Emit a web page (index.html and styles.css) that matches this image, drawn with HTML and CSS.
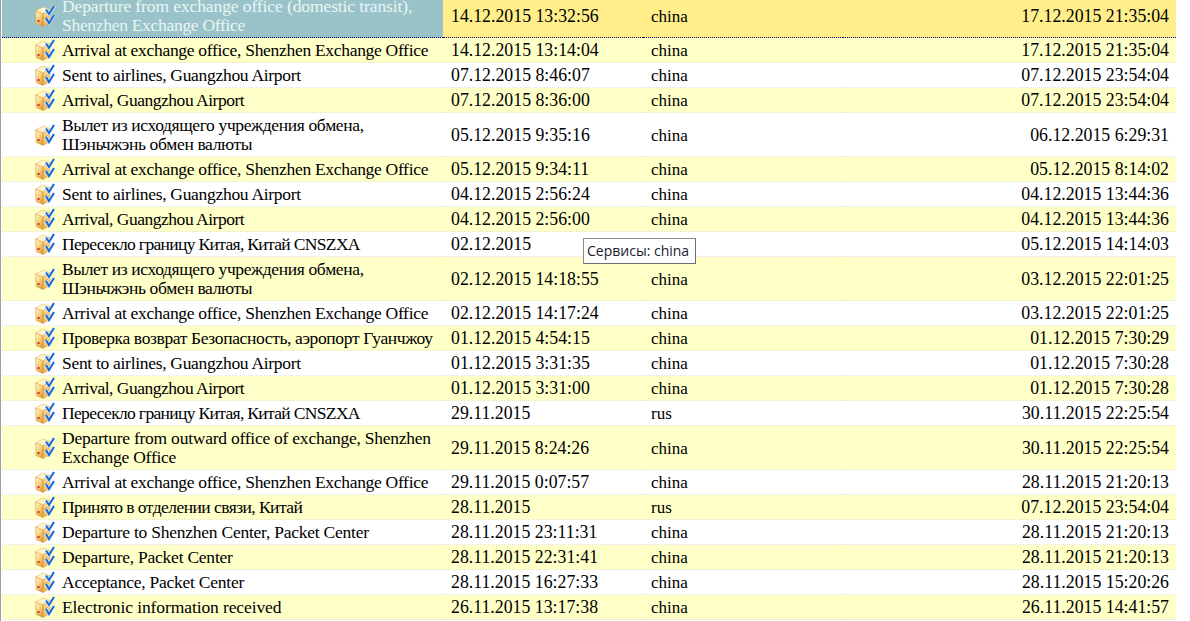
FILE: index.html
```html
<!DOCTYPE html>
<html lang="ru">
<head>
<meta charset="utf-8">
<title>Tracking</title>
<link rel="stylesheet" href="styles.css">
</head>
<body>
<svg class="defs" width="0" height="0" aria-hidden="true">
  <defs>
    <linearGradient id="boxFront" x1="0" y1="0" x2="0.6" y2="1">
      <stop offset="0" stop-color="#fff3c4"/><stop offset="0.5" stop-color="#fad686"/><stop offset="1" stop-color="#e2a040"/>
    </linearGradient>
    <linearGradient id="boxSide" x1="0" y1="0" x2="0" y2="1">
      <stop offset="0" stop-color="#fbe09c"/><stop offset="1" stop-color="#eeb658"/>
    </linearGradient>
    <linearGradient id="boxSel" x1="0" y1="0" x2="0.6" y2="1">
      <stop offset="0" stop-color="#cfe2e8"/><stop offset="0.5" stop-color="#a9c3cf"/><stop offset="1" stop-color="#7f99b0"/>
    </linearGradient>
    <linearGradient id="boxSelSide" x1="0" y1="0" x2="0" y2="1">
      <stop offset="0" stop-color="#bdd3dc"/><stop offset="1" stop-color="#8fa9bb"/>
    </linearGradient>
    <symbol id="parcel" viewBox="0 0 20 22">
      <path class="box-top" d="M0.5 6 L8 2 L15 4.500 L8 9 Z"/>
      <path class="box-front" d="M0.5 6 L8 9 V21.500 L1 18.500 Z"/>
      <path class="box-side" d="M8 9 L15 4.500 V17.500 L8 21.500 Z"/>
      <path class="box-line" d="M8 9 V21.500 M8 13.500 L15 10.500"/>
      <rect class="box-dot" x="2.500" y="15" width="2" height="2"/>
      <path class="halo" d="M11 4.500 L14 9 L19 1"/>
      <path class="halo" d="M11 13 L14 18 L19 10"/>
      <path class="check" d="M11 4.500 L14 9 L19 1"/>
      <path class="check" d="M11 13 L14 18 L19 10"/>
    </symbol>
  </defs>
</svg>
<div class="viewport">
<table class="log">
  <colgroup><col class="c-name"><col class="c-date"><col class="c-svc"><col class="c-end"></colgroup>
  <tbody>
    <tr class="selected tall"><td class="name"><div class="cell"><svg class="ico"><use href="#parcel"/></svg><span><span class="sp-wide">Departure from exchange office (domestic transit),</span><br>Shenzhen Exchange Office</span></div></td><td class="date">14.12.2015 13:32:56</td><td class="svc">china</td><td class="end">17.12.2015 21:35:04</td></tr>
    <tr class="alt"><td class="name"><div class="cell"><svg class="ico"><use href="#parcel"/></svg><span>Arrival at exchange office, Shenzhen Exchange Office</span></div></td><td class="date">14.12.2015 13:14:04</td><td class="svc">china</td><td class="end">17.12.2015 21:35:04</td></tr>
    <tr><td class="name"><div class="cell"><svg class="ico"><use href="#parcel"/></svg><span>Sent to airlines, Guangzhou Airport</span></div></td><td class="date">07.12.2015 8:46:07</td><td class="svc">china</td><td class="end">07.12.2015 23:54:04</td></tr>
    <tr class="alt"><td class="name"><div class="cell"><svg class="ico"><use href="#parcel"/></svg><span class="sp-tight">Arrival, Guangzhou Airport</span></div></td><td class="date">07.12.2015 8:36:00</td><td class="svc">china</td><td class="end">07.12.2015 23:54:04</td></tr>
    <tr class="tall"><td class="name"><div class="cell"><svg class="ico"><use href="#parcel"/></svg><span class="sp-mid">Вылет из исходящего учреждения обмена,<br>Шэньчжэнь обмен валюты</span></div></td><td class="date">05.12.2015 9:35:16</td><td class="svc">china</td><td class="end">06.12.2015 6:29:31</td></tr>
    <tr class="alt"><td class="name"><div class="cell"><svg class="ico"><use href="#parcel"/></svg><span>Arrival at exchange office, Shenzhen Exchange Office</span></div></td><td class="date">05.12.2015 9:34:11</td><td class="svc">china</td><td class="end">05.12.2015 8:14:02</td></tr>
    <tr><td class="name"><div class="cell"><svg class="ico"><use href="#parcel"/></svg><span>Sent to airlines, Guangzhou Airport</span></div></td><td class="date">04.12.2015 2:56:24</td><td class="svc">china</td><td class="end">04.12.2015 13:44:36</td></tr>
    <tr class="alt"><td class="name"><div class="cell"><svg class="ico"><use href="#parcel"/></svg><span class="sp-tight">Arrival, Guangzhou Airport</span></div></td><td class="date">04.12.2015 2:56:00</td><td class="svc">china</td><td class="end">04.12.2015 13:44:36</td></tr>
    <tr><td class="name"><div class="cell"><svg class="ico"><use href="#parcel"/></svg><span class="sp-tightest">Пересекло границу Китая, Китай CNSZXA</span></div></td><td class="date">02.12.2015</td><td class="svc"></td><td class="end">05.12.2015 14:14:03</td></tr>
    <tr class="alt tall"><td class="name"><div class="cell"><svg class="ico"><use href="#parcel"/></svg><span class="sp-mid">Вылет из исходящего учреждения обмена,<br>Шэньчжэнь обмен валюты</span></div></td><td class="date">02.12.2015 14:18:55</td><td class="svc">china</td><td class="end">03.12.2015 22:01:25</td></tr>
    <tr><td class="name"><div class="cell"><svg class="ico"><use href="#parcel"/></svg><span>Arrival at exchange office, Shenzhen Exchange Office</span></div></td><td class="date">02.12.2015 14:17:24</td><td class="svc">china</td><td class="end">03.12.2015 22:01:25</td></tr>
    <tr class="alt"><td class="name"><div class="cell"><svg class="ico"><use href="#parcel"/></svg><span class="sp-mid">Проверка возврат Безопасность, аэропорт Гуанчжоу</span></div></td><td class="date">01.12.2015 4:54:15</td><td class="svc">china</td><td class="end">01.12.2015 7:30:29</td></tr>
    <tr><td class="name"><div class="cell"><svg class="ico"><use href="#parcel"/></svg><span>Sent to airlines, Guangzhou Airport</span></div></td><td class="date">01.12.2015 3:31:35</td><td class="svc">china</td><td class="end">01.12.2015 7:30:28</td></tr>
    <tr class="alt"><td class="name"><div class="cell"><svg class="ico"><use href="#parcel"/></svg><span class="sp-tight">Arrival, Guangzhou Airport</span></div></td><td class="date">01.12.2015 3:31:00</td><td class="svc">china</td><td class="end">01.12.2015 7:30:28</td></tr>
    <tr><td class="name"><div class="cell"><svg class="ico"><use href="#parcel"/></svg><span class="sp-tightest">Пересекло границу Китая, Китай CNSZXA</span></div></td><td class="date">29.11.2015</td><td class="svc">rus</td><td class="end">30.11.2015 22:25:54</td></tr>
    <tr class="alt tall"><td class="name"><div class="cell"><svg class="ico"><use href="#parcel"/></svg><span class="sp-loose">Departure from outward office of exchange, Shenzhen<br>Exchange Office</span></div></td><td class="date">29.11.2015 8:24:26</td><td class="svc">china</td><td class="end">30.11.2015 22:25:54</td></tr>
    <tr><td class="name"><div class="cell"><svg class="ico"><use href="#parcel"/></svg><span>Arrival at exchange office, Shenzhen Exchange Office</span></div></td><td class="date">29.11.2015 0:07:57</td><td class="svc">china</td><td class="end">28.11.2015 21:20:13</td></tr>
    <tr class="alt"><td class="name"><div class="cell"><svg class="ico"><use href="#parcel"/></svg><span class="sp-tighter">Принято в отделении связи, Китай</span></div></td><td class="date">28.11.2015</td><td class="svc">rus</td><td class="end">07.12.2015 23:54:04</td></tr>
    <tr><td class="name"><div class="cell"><svg class="ico"><use href="#parcel"/></svg><span class="sp-loose">Departure to Shenzhen Center, Packet Center</span></div></td><td class="date">28.11.2015 23:11:31</td><td class="svc">china</td><td class="end">28.11.2015 21:20:13</td></tr>
    <tr class="alt"><td class="name"><div class="cell"><svg class="ico"><use href="#parcel"/></svg><span class="sp-loose">Departure, Packet Center</span></div></td><td class="date">28.11.2015 22:31:41</td><td class="svc">china</td><td class="end">28.11.2015 21:20:13</td></tr>
    <tr><td class="name"><div class="cell"><svg class="ico"><use href="#parcel"/></svg><span class="sp-loose">Acceptance, Packet Center</span></div></td><td class="date">28.11.2015 16:27:33</td><td class="svc">china</td><td class="end">28.11.2015 15:20:26</td></tr>
    <tr class="alt"><td class="name"><div class="cell"><svg class="ico"><use href="#parcel"/></svg><span class="sp-wide">Electronic information received</span></div></td><td class="date">26.11.2015 13:17:38</td><td class="svc">china</td><td class="end">26.11.2015 14:41:57</td></tr>
  </tbody>
</table>
<div class="tooltip">Сервисы: china</div>
</div>
</body>
</html>
```
FILE: styles.css
```css
html, body {
  margin: 0;
  padding: 0;
  height: 621px;
  overflow: hidden;
  background: #fff;
}
.defs { display: block; height: 0; }
.viewport {
  position: relative;
  height: 621px;
  overflow: hidden;
  border-left: 1px solid #a0a0a0;
  padding-left: 1px;
  box-sizing: border-box;
}
.log {
  width: 1174px;
  margin-top: -6px;
  border-collapse: separate;
  border-spacing: 0;
  table-layout: fixed;
  font-family: "Liberation Serif", "Times New Roman", serif;
  font-size: 17.5px;
  line-height: 19px;
  color: #000;
}
.c-name { width: 441px; }
.c-date { width: 200px; }
.c-svc { width: 200px; }
.log td {
  height: 25px;
  box-sizing: border-box;
  padding: 0;
  vertical-align: middle;
  border-bottom: 1px dotted #e6e6da;
  white-space: nowrap;
}
.log tr.tall td { height: 44px; }
.log tr.tall td.date, .log tr.tall td.svc, .log tr.tall td.end { padding-top: 2px; }
.cell {
  display: flex;
  align-items: center;
  gap: 7px;
  padding-left: 33px;
  letter-spacing: -0.3px;
}
.sp-wide { letter-spacing: -0.1px; }
.sp-loose { letter-spacing: -0.24px; }
.sp-mid { letter-spacing: -0.37px; }
.sp-tight { letter-spacing: -0.49px; }
.sp-tighter { letter-spacing: -0.55px; }
.sp-tightest { letter-spacing: -0.66px; }
.ico { flex: none; width: 20px; height: 22px; }
.date { padding-left: 8px !important; font-size: 17.8px; }
.svc { padding-left: 8px !important; font-size: 17px; }
.end { text-align: right; padding-right: 7px !important; font-size: 17.8px; }
.alt td { background: #ffffc8; }

.selected td {
  background: #ffee8a;
  border-bottom: 1px dotted #00006e;
}
.selected td.name {
  background: #99c3c8;
  color: #eaf5f5;
}
.box-top { fill: #fff4cc; stroke: #d9ab5c; stroke-width: 0.5; }
.box-front { fill: url(#boxFront); stroke: #d69a42; stroke-width: 0.5; }
.box-side { fill: url(#boxSide); stroke: #d69a42; stroke-width: 0.5; }
.box-line { fill: none; stroke: #d69a42; stroke-width: 0.6; }
.box-dot { fill: #c6302a; }
.halo { fill: none; stroke: #e8f6ff; stroke-width: 3; }
.check { fill: none; stroke: #1468d8; stroke-width: 2; }
.selected .box-top { fill: #d3e4ea; stroke: #8ba6b6; }
.selected .box-front { fill: url(#boxSel); stroke: #7f9cad; }
.selected .box-side { fill: url(#boxSelSide); stroke: #7f9cad; }
.selected .box-line { stroke: #7f9cad; }
.selected .box-dot { fill: #a0507a; }
.selected .halo { stroke: #b8dce4; }

.tooltip {
  position: absolute;
  left: 582px;
  top: 238px;
  box-sizing: border-box;
  height: 26px;
  width: 113px;
  padding: 0 3px;
  line-height: 24px;
  border: 1px solid #8c8c8c;
  border-right-color: #6e6e6e;
  border-bottom-color: #6e6e6e;
  background: #fff;
  color: #1c1c30;
  font-family: "Open Sans", "Noto Sans", sans-serif;
  font-size: 14px;
  white-space: nowrap;
}
```
